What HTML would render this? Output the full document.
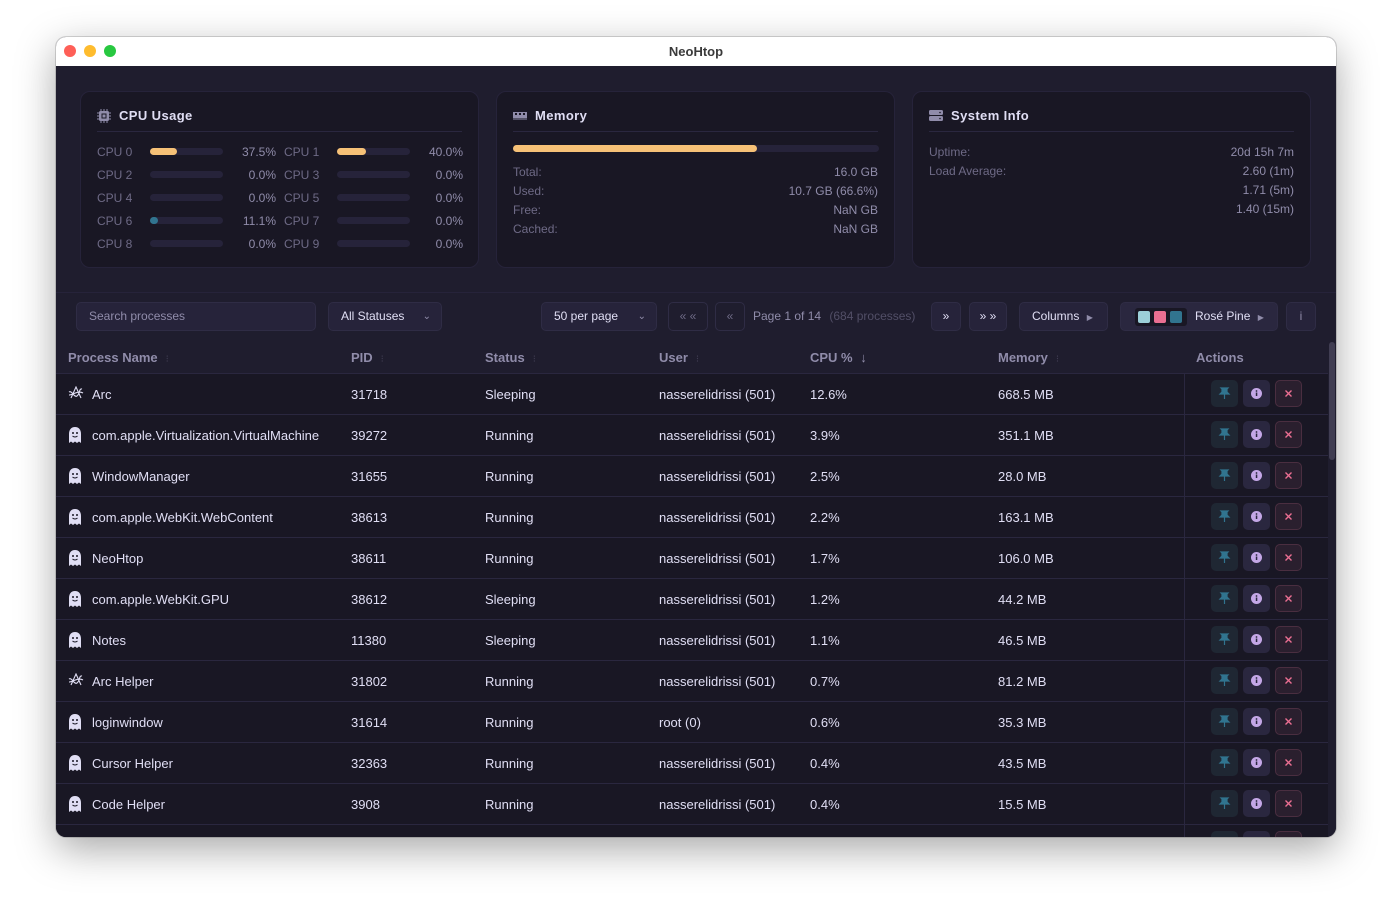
<!DOCTYPE html>
<html><head><meta charset="utf-8">
<style>
*{box-sizing:border-box;margin:0;padding:0}
body{width:1392px;height:912px;background:#fff;font-family:"Liberation Sans",sans-serif;position:relative;overflow:hidden}
.win{position:absolute;left:56px;top:37px;width:1280px;height:800px;border-radius:10px;overflow:hidden;background:#1f1d2e;box-shadow:0 12px 40px rgba(0,0,0,.35),0 0 0 1px rgba(0,0,0,.15)}
.tb{height:29px;background:#fff;position:relative;text-align:center;font-size:13px;font-weight:bold;color:#3a3a3a;line-height:29px}
.dot{position:absolute;top:8px;width:12px;height:12px;border-radius:50%}
.a{position:absolute;white-space:nowrap}
.card{position:absolute;top:54px;width:399px;height:177px;background:#191724;border:1px solid #26233a;border-radius:10px}
.ct{position:absolute;left:16px;right:16px;top:14px;height:26px;border-bottom:1px solid #2a273f;font-size:13px;font-weight:bold;color:#e0def4;letter-spacing:.4px;padding-left:22px;line-height:20px}
.ct svg{position:absolute;left:0;top:3px}
.lb{color:#6e6a86;font-size:12px}
.vl{color:#908caa;font-size:12px;text-align:right}
.bar{position:absolute;height:7px;border-radius:4px;background:#26233a}
.bar i{display:block;height:7px;border-radius:4px;background:#f6c177}
.btn{position:absolute;top:265px;height:29px;background:#26233a;border:1px solid #2f2c45;border-radius:5px;color:#e0def4;font-size:12px;line-height:27px;padding:0 12px;white-space:nowrap}
.th{position:absolute;top:304px;left:0;width:1272px;height:33px;border-bottom:1px solid #2a273f;background:#1f1d2e}
.th span{position:absolute;top:9px;font-size:13px;color:#908caa;font-weight:bold}
.th b{color:#403d52;font-weight:normal;margin-left:8px;font-size:10px}
.row{position:absolute;left:0;width:1272px;height:41px;border-bottom:1px solid #2a273f;background:#191724;font-size:13px;color:#e0def4}
.row span{position:absolute;top:13px;white-space:nowrap}
.row svg.ic{position:absolute;left:12px;top:12px}
.ab{position:absolute;top:6px;width:27px;height:27px;border-radius:5px}
</style></head><body>
<div class="win">
<div class="tb">NeoHtop
<div class="dot" style="left:8px;background:#fe5f57"></div>
<div class="dot" style="left:28px;background:#febc2e"></div>
<div class="dot" style="left:48px;background:#28c840"></div></div>
<div class="a" style="left:0;top:29px;width:1280px;height:771px;background:#1f1d2e">
<div class="card" style="left:24px;top:25px">
<div class="ct"><svg width="14" height="14" viewBox="0 0 14 14"><rect x="2" y="2" width="10" height="10" rx="1.5" fill="#908caa"/><rect x="4.5" y="4.5" width="5" height="5" fill="#191724"/><rect x="5.5" y="5.5" width="3" height="3" fill="#908caa"/><g stroke="#908caa" stroke-width="1"><path d="M4 0v2M7 0v2M10 0v2M4 12v2M7 12v2M10 12v2M0 4h2M0 7h2M0 10h2M12 4h2M12 7h2M12 10h2"/></g></svg>CPU Usage</div>
</div>
<div class="a" style="left:0;top:0">
<div class="a lb" style="left:41px;top:79px">CPU 0</div><div class="bar" style="left:94px;top:82px;width:73px"><i style="width:27px"></i></div><div class="a vl" style="left:170px;top:79px;width:50px">37.5%</div>
<div class="a lb" style="left:228px;top:79px">CPU 1</div><div class="bar" style="left:281px;top:82px;width:73px"><i style="width:29px"></i></div><div class="a vl" style="left:356px;top:79px;width:51px">40.0%</div>
<div class="a lb" style="left:41px;top:102px">CPU 2</div><div class="bar" style="left:94px;top:105px;width:73px"></div><div class="a vl" style="left:170px;top:102px;width:50px">0.0%</div>
<div class="a lb" style="left:228px;top:102px">CPU 3</div><div class="bar" style="left:281px;top:105px;width:73px"></div><div class="a vl" style="left:356px;top:102px;width:51px">0.0%</div>
<div class="a lb" style="left:41px;top:125px">CPU 4</div><div class="bar" style="left:94px;top:128px;width:73px"></div><div class="a vl" style="left:170px;top:125px;width:50px">0.0%</div>
<div class="a lb" style="left:228px;top:125px">CPU 5</div><div class="bar" style="left:281px;top:128px;width:73px"></div><div class="a vl" style="left:356px;top:125px;width:51px">0.0%</div>
<div class="a lb" style="left:41px;top:148px">CPU 6</div><div class="bar" style="left:94px;top:151px;width:73px"><i style="width:8px;background:#31748f"></i></div><div class="a vl" style="left:170px;top:148px;width:50px">11.1%</div>
<div class="a lb" style="left:228px;top:148px">CPU 7</div><div class="bar" style="left:281px;top:151px;width:73px"></div><div class="a vl" style="left:356px;top:148px;width:51px">0.0%</div>
<div class="a lb" style="left:41px;top:171px">CPU 8</div><div class="bar" style="left:94px;top:174px;width:73px"></div><div class="a vl" style="left:170px;top:171px;width:50px">0.0%</div>
<div class="a lb" style="left:228px;top:171px">CPU 9</div><div class="bar" style="left:281px;top:174px;width:73px"></div><div class="a vl" style="left:356px;top:171px;width:51px">0.0%</div>
</div>
<div class="card" style="left:440px;top:25px">
<div class="ct"><svg width="14" height="12" viewBox="0 0 14 12"><rect x="0" y="3" width="14" height="6" fill="#908caa"/><g fill="#191724"><rect x="2" y="4" width="2" height="2"/><rect x="6" y="4" width="2" height="2"/><rect x="10" y="4" width="2" height="2"/></g><path d="M1 9v2M3 9v2M5 9v2M7 9v2M9 9v2M11 9v2M13 9v2" stroke="#908caa"/></svg>Memory</div>
<div class="bar" style="left:16px;top:53px;width:366px"><i style="width:244px"></i></div>
<div class="a lb" style="left:16px;top:73px">Total:</div><div class="a vl" style="right:16px;top:73px">16.0 GB</div>
<div class="a lb" style="left:16px;top:92px">Used:</div><div class="a vl" style="right:16px;top:92px">10.7 GB (66.6%)</div>
<div class="a lb" style="left:16px;top:111px">Free:</div><div class="a vl" style="right:16px;top:111px">NaN GB</div>
<div class="a lb" style="left:16px;top:130px">Cached:</div><div class="a vl" style="right:16px;top:130px">NaN GB</div>
</div>
<div class="card" style="left:856px;top:25px">
<div class="ct"><svg width="14" height="13" viewBox="0 0 14 13"><rect x="0" y="1" width="14" height="5" rx="1.5" fill="#908caa"/><rect x="0" y="7" width="14" height="5" rx="1.5" fill="#908caa"/><circle cx="11" cy="3.5" r=".8" fill="#191724"/><circle cx="11" cy="9.5" r=".8" fill="#191724"/></svg>System Info</div>
<div class="a lb" style="left:16px;top:53px">Uptime:</div><div class="a vl" style="right:16px;top:53px">20d 15h 7m</div>
<div class="a lb" style="left:16px;top:72px">Load Average:</div><div class="a vl" style="right:16px;top:72px">2.60 (1m)</div>
<div class="a vl" style="right:16px;top:91px">1.71 (5m)</div>
<div class="a vl" style="right:16px;top:110px">1.40 (15m)</div>
</div>
</div>
<div class="a" style="left:0;top:255px;width:1280px;height:1px;background:#26233a"></div>
<div class="btn" style="left:20px;width:240px;color:#908caa">Search processes</div>
<div class="btn" style="left:272px;width:114px">All Statuses<span style="position:absolute;right:10px;color:#908caa;font-size:10px">&#8964;</span></div>
<div class="btn" style="left:485px;width:116px">50 per page<span style="position:absolute;right:10px;color:#908caa;font-size:10px">&#8964;</span></div>
<div class="btn" style="left:612px;width:40px;color:#6e6a86;background:#1f1d2e;text-align:center;padding:0">« «</div>
<div class="btn" style="left:659px;width:30px;color:#6e6a86;background:#1f1d2e;text-align:center;padding:0">«</div>
<div class="a" style="left:697px;top:272px;font-size:12px;color:#908caa">Page 1 of 14 <span style="color:#524f67;margin-left:5px">(684 processes)</span></div>
<div class="btn" style="left:875px;width:30px;text-align:center;padding:0">»</div>
<div class="btn" style="left:913px;width:38px;text-align:center;padding:0">» »</div>
<div class="btn" style="left:963px;width:89px">Columns <span style="font-size:8px;color:#908caa;margin-left:4px">&#9654;</span></div>
<div class="btn" style="left:1064px;width:158px;background:#2a273f;padding-left:74px">Rosé Pine <span style="font-size:8px;color:#908caa;margin-left:4px">&#9654;</span>
<div class="a" style="left:14px;top:5px;width:52px;height:18px;background:#191724;border-radius:3px"></div>
<div class="a" style="left:17px;top:8px;width:12px;height:12px;background:#9ccfd8;border-radius:2px"></div>
<div class="a" style="left:33px;top:8px;width:12px;height:12px;background:#eb6f92;border-radius:2px"></div>
<div class="a" style="left:49px;top:8px;width:12px;height:12px;background:#31748f;border-radius:2px"></div></div>
<div class="btn" style="left:1230px;width:30px;text-align:center;padding:0;color:#908caa">i</div>
<div class="th"><span style="left:12px">Process Name<b>⁝</b></span><span style="left:295px">PID<b>⁝</b></span><span style="left:429px">Status<b>⁝</b></span><span style="left:603px">User<b>⁝</b></span><span style="left:754px">CPU % <span style="position:static;color:#908caa;margin-left:4px">↓</span></span><span style="left:942px">Memory<b>⁝</b></span><span style="left:1140px">Actions</span></div>
<div id="rows"></div>
<div class="a" style="left:1128px;top:337px;width:1px;height:463px;background:#2a273f"></div>
<div class="a" style="left:1272px;top:304px;width:8px;height:496px;background:#1f1d2e"></div>
<div class="a" style="left:1273px;top:305px;width:6px;height:118px;background:#403d52;border-radius:3px"></div>
</div>
<script>
var ghost='<svg class="ic" width="14" height="16" viewBox="0 0 14 16"><path d="M7 0C3 0 1 3 1 7v9l2-1.5 2 1.5 2-1.5 2 1.5 2-1.5 2 1.5V7c0-4-2-7-6-7z" fill="#e0def4"/><circle cx="5" cy="6" r="1" fill="#191724"/><circle cx="9" cy="6" r="1" fill="#191724"/><path d="M4.5 9q2.5 2 5 0" stroke="#191724" fill="none"/></svg>';
var arc='<svg class="ic" width="16" height="14" viewBox="0 0 16 14"><path d="M1 6c3-2 5 6 8 4s2-8 5-7M3 12L8 1l5 11M1 9c4 0 9-5 14-2" stroke="#e0def4" stroke-width="1.1" fill="none"/></svg>';
var d=[["Arc",31718,"Sleeping","nasserelidrissi (501)","12.6%","668.5 MB",1],["com.apple.Virtualization.VirtualMachine",39272,"Running","nasserelidrissi (501)","3.9%","351.1 MB"],["WindowManager",31655,"Running","nasserelidrissi (501)","2.5%","28.0 MB"],["com.apple.WebKit.WebContent",38613,"Running","nasserelidrissi (501)","2.2%","163.1 MB"],["NeoHtop",38611,"Running","nasserelidrissi (501)","1.7%","106.0 MB"],["com.apple.WebKit.GPU",38612,"Sleeping","nasserelidrissi (501)","1.2%","44.2 MB"],["Notes",11380,"Sleeping","nasserelidrissi (501)","1.1%","46.5 MB"],["Arc Helper",31802,"Running","nasserelidrissi (501)","0.7%","81.2 MB",1],["loginwindow",31614,"Running","root (0)","0.6%","35.3 MB"],["Cursor Helper",32363,"Running","nasserelidrissi (501)","0.4%","43.5 MB"],["Code Helper",3908,"Running","nasserelidrissi (501)","0.4%","15.5 MB"],["","","","","","",0]];
var h='';
d.forEach(function(r,i){var t=337+i*41;
h+='<div class="row" style="top:'+t+'px">'+(r[0]?(r[6]?arc:ghost)+'<span style="left:36px">'+r[0]+'</span><span style="left:295px">'+r[1]+'</span><span style="left:429px">'+r[2]+'</span><span style="left:603px">'+r[3]+'</span><span style="left:754px">'+r[4]+'</span><span style="left:942px">'+r[5]+'</span>':'')+
'<div class="ab" style="left:1155px;background:#1f2733"><svg width="27" height="27" viewBox="0 0 27 27"><path d="M10 8h7l-1 1v3l2 2h-9l2-2V9zM13.5 14v5" stroke="#31748f" fill="#31748f" stroke-width="1.2"/></svg></div>'+
'<div class="ab" style="left:1187px;background:#2a273f"><svg width="27" height="27"><circle cx="13.5" cy="13.5" r="5.5" fill="#c4a7e7"/><rect x="12.8" y="12.5" width="1.5" height="3.5" fill="#2a273f"/><circle cx="13.5" cy="11" r=".9" fill="#2a273f"/></svg></div>'+
'<div class="ab" style="left:1219px;background:#2a1f2e;border:1px solid #4a2e40"><svg width="25" height="25"><path d="M9.5 9.5l6 6M15.5 9.5l-6 6" stroke="#eb6f92" stroke-width="1.4"/></svg></div></div>';});
document.getElementById('rows').outerHTML=h;
</script>
</div>
</body></html>
